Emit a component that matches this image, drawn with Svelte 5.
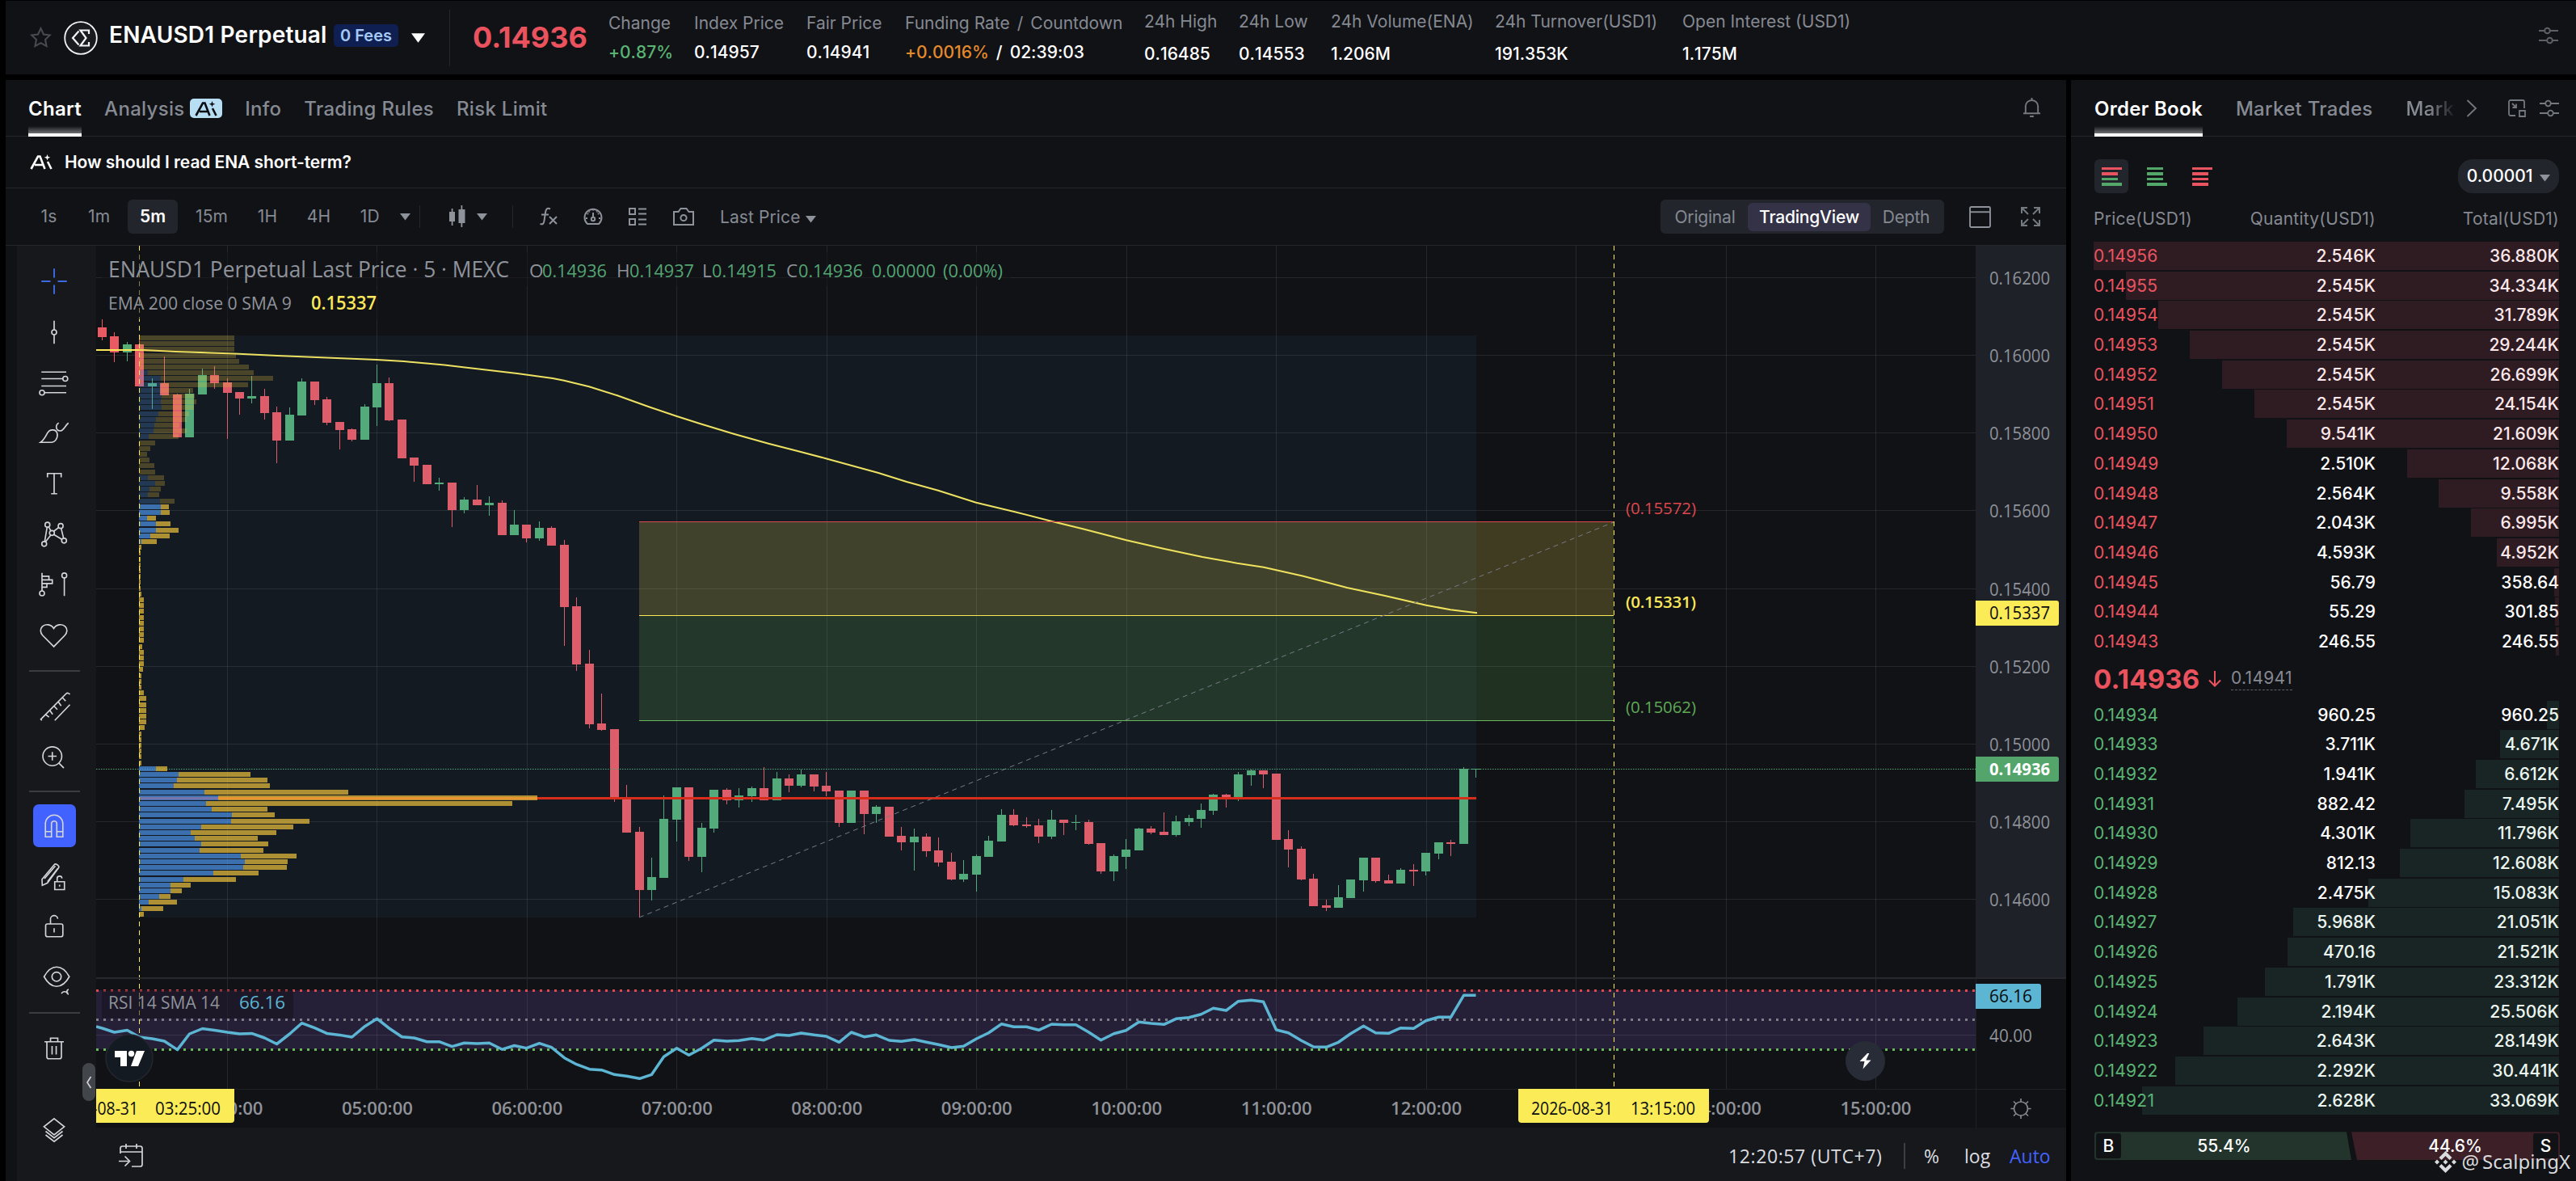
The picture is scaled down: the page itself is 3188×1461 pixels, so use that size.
<script>
    const stats = [
        { label: 'Change', value: '+0.87%', tone: 'up', w: 106 },
        { label: 'Index Price', value: '0.14957', w: 139 },
        { label: 'Fair Price', value: '0.14941', w: 122 },
        { label: 'Funding Rate', extra: 'Countdown', value: '+0.0016%', countdown: '02:39:03', w: 296 },
        { label: '24h High', value: '0.16485', w: 117, low: true },
        { label: '24h Low', value: '0.14553', w: 114, low: true },
        { label: '24h Volume(ENA)', value: '1.206M', w: 203, low: true },
        { label: '24h Turnover(USD1)', value: '191.353K', w: 232, low: true },
        { label: 'Open Interest (USD1)', value: '1.175M', w: 240, low: true }
    ];

    const asks = [
        ['0.14956', '2.546K', '36.880K'], ['0.14955', '2.545K', '34.334K'], ['0.14954', '2.545K', '31.789K'],
        ['0.14953', '2.545K', '29.244K'], ['0.14952', '2.545K', '26.699K'], ['0.14951', '2.545K', '24.154K'],
        ['0.14950', '9.541K', '21.609K'], ['0.14949', '2.510K', '12.068K'], ['0.14948', '2.564K', '9.558K'],
        ['0.14947', '2.043K', '6.995K'], ['0.14946', '4.593K', '4.952K'], ['0.14945', '56.79', '358.64'],
        ['0.14944', '55.29', '301.85'], ['0.14943', '246.55', '246.55']
    ];
    const bids = [
        ['0.14934', '960.25', '960.25'], ['0.14933', '3.711K', '4.671K'], ['0.14932', '1.941K', '6.612K'],
        ['0.14931', '882.42', '7.495K'], ['0.14930', '4.301K', '11.796K'], ['0.14929', '812.13', '12.608K'],
        ['0.14928', '2.475K', '15.083K'], ['0.14927', '5.968K', '21.051K'], ['0.14926', '470.16', '21.521K'],
        ['0.14925', '1.791K', '23.312K'], ['0.14924', '2.194K', '25.506K'], ['0.14923', '2.643K', '28.149K'],
        ['0.14922', '2.292K', '30.441K'], ['0.14921', '2.628K', '33.069K']
    ];
    const depth = (total) => {
        const n = parseFloat(total) * (total.endsWith('K') ? 1 : 0.001);
        return (n / 36.88) * 100;
    };

    // chart geometry: svg user units are page pixels
    const hourX = (i) => 281.5 + i * 185.45;
    const hours = ['04', '05', '06', '07', '08', '09', '10', '11', '12', '13', '14', '15'];
    const priceLabels = ['0.16200', '0.16000', '0.15800', '0.15600', '0.15400', '0.15200', '0.15000', '0.14800', '0.14600'];
    const gridY = (i) => Math.round(343 + i * 96.13) + 0.5;
    const candleX = (i) => Math.floor(126.5 + i * 15.4545) + 0.5;

    // wick top, body top, body bottom, wick bottom; leading minus marks a falling candle
    const candles = [
        [-395,405,417,421],[-411,416,436,448],[423,426,436,447],[-419,426,478,478],[468,474,478,506],[-441,474,489,489],
        [-487,488,541,541],[481,487,541,541],[456,464,488,488],[-453,464,474,481],[-468,473,486,543],[-485,485,493,513],
        [465,490,493,499],[-481,490,511,519],[-503,510,545,573],[504,513,545,545],[468,472,514,514],[-472,472,495,501],
        [-491,494,523,526],[-522,522,532,556],[-530,531,544,546],[500,503,544,544],[451,474,504,527],[-467,474,520,521],
        [-519,519,567,567],[-566,566,576,596],[-575,575,599,599],[591,597,599,607],[-597,597,631,652],[615,618,631,635],
        [-600,618,625,625],[614,622,625,638],[-619,622,662,662],[631,649,662,662],[-649,649,666,671],[645,653,666,669],
        [-651,653,675,675],[-668,674,751,799],[-739,750,822,830],[-804,821,896,901],[-858,895,903,904],[-902,902,988,992],
        [-971,987,1030,1030],[-1023,1029,1101,1135],[1061,1085,1101,1114],[984,1013,1086,1086],[974,974,1014,1041],[-974,974,1060,1065],
        [1018,1024,1060,1079],[977,977,1025,1030],[-975,977,990,995],[975,984,990,999],[973,975,985,992],[-949,975,990,990],
        [955,963,990,990],[-958,963,972,980],[952,958,972,974],[-958,958,973,979],[-955,972,979,985],[-978,978,1018,1023],
        [978,978,1018,1018],[-978,978,1007,1032],[996,998,1007,1018],[-998,998,1035,1035],[-1023,1034,1042,1052],[1025,1035,1042,1077],
        [-1031,1035,1053,1060],[-1036,1052,1067,1072],[-1055,1066,1088,1089],[1064,1081,1088,1091],[1057,1059,1082,1103],[1034,1040,1060,1060],
        [1001,1008,1041,1041],[-1001,1008,1021,1022],[-1011,1020,1022,1024],[-1013,1021,1035,1043],[1002,1014,1035,1038],[-1014,1014,1018,1033],
        [1008,1017,1018,1027],[-1014,1017,1044,1045],[-1043,1043,1078,1081],[1057,1059,1078,1090],[1038,1051,1060,1075],[1024,1025,1052,1052],
        [-1022,1025,1030,1032],[-1005,1029,1033,1033],[1009,1016,1033,1035],[1008,1012,1017,1022],[994,1002,1013,1024],[982,983,1003,1008],
        [-982,983,987,999],[955,958,988,991],[952,953,959,972],[-953,953,958,975],[-957,957,1039,1039],[-1027,1038,1051,1073],
        [-1047,1050,1088,1089],[-1081,1087,1121,1121],[-1113,1120,1123,1127],[1095,1110,1123,1123],[1088,1088,1111,1111],[1061,1061,1089,1103],
        [-1061,1061,1090,1092],[-1082,1089,1093,1093],[1074,1076,1093,1093],[-1069,1076,1078,1096],[1055,1055,1078,1083],[1042,1042,1056,1063],
        [-1039,1042,1044,1059],[949,951,1044,1044],[951,951,952,962]
    ].map(([h, o, c, l], i) => ({ x: candleX(i), up: h > 0, h: Math.abs(h), top: o, bottom: c, l }));

    // volume profile rows, [total width, buy width]
    const profile = [
        [118,0],[118,0],[118,0],[120,0],[124,0],[136,0],[142,11],[166,27],[135,27],[67,27],
        [69,28],[71,27],[68,28],[62,24],[59,21],[50,19],[59,18],[49,12],[20,0],[14,0],
        [10,0],[13,0],[19,0],[20,0],[31,11],[32,20],[27,13],[25,11],[44,26],[37,27],
        [38,27],[21,10],[39,21],[49,21],[38,14],[22,3],[3,0],[2,0],[2,0],[2,0],
        [2,0],[2,0],[2,0],[2,0],[3,0],[6,0],[6,0],[6,0],[6,0],[6,0],
        [6,0],[6,0],[6,0],[4,0],[6,0],[6,0],[6,0],[5,0],[3,0],[3,0],
        [3,0],[6,0],[9,0],[9,0],[9,0],[9,0],[9,0],[7,0],[3,0],[3,0],
        [3,0],[3,0],[3,0],[3,0],[35,21],[138,49],[159,47],[162,43],[259,81],[493,98],
        [462,83],[159,90],[168,115],[211,114],[191,77],[170,64],[147,69],[160,77],[154,75],[195,126],
        [184,131],[183,129],[148,92],[120,55],[64,39],[53,39],[39,25],[47,12],[30,3],[6,0]
    ];

    const ema = '119,433 178,433 217,435 290,437.5 343,440 466,445 500,447 550,451.5 571,454 640,462 684,468 698,470.7 729,478.3 764,489.3 803,503.3 837,514.7 866,524 908,536.7 951,548.7 990,558.7 1024,567.7 1087,585 1122,596 1161,606.7 1208,621.7 1255,633 1301,644.7 1340,654.3 1394,668.3 1441,679 1488,689 1531,696.7 1564,701.7 1613,712.7 1667,727 1714,737 1765,748.7 1795,754.3 1828,758.3';

    const rsi = [
        1272,1277,1274.5,1283,1285,1288,1298.6,1279,1272.5,1274.5,1277,1279,1278.4,1284,1291.5,1279,1265.7,1271.7,1278.4,1280.4,
        1283,1269.7,1260.2,1272,1282.8,1284,1288.7,1288.7,1294.6,1290.3,1291,1290.3,1298.2,1293.5,1296.6,1290.7,1295.7,1308.7,1316.7,1322.7,
        1323.7,1329.3,1331.3,1334.3,1329.3,1307.3,1296.7,1305.3,1296.7,1286.7,1288,1287.3,1284.7,1286.7,1280,1281,1278,1280.3,1282,1289.3,
        1277,1282.7,1280.3,1287,1288.3,1286,1289.3,1292.3,1296,1294.3,1285,1277.7,1266.7,1270.3,1270.3,1274.3,1267,1267.7,1267.7,1277,
        1286.7,1278.7,1274.7,1264.3,1266,1267.3,1260.3,1258.7,1254.7,1247.3,1250,1238.7,1237.3,1239.3,1274,1277.7,1287.3,1295,1295.3,1289.3,
        1278.7,1269.3,1277.7,1278.3,1271.7,1272.3,1262.7,1258.3,1258.3,1231.3,1231.3
    ];
    const rsiPoints = '119,1270 ' + rsi.map((y, i) => `${candleX(i)},${y}`).join(' ');

    const ohlc = [
        ['O', '0.14936', 655, 671], ['H', '0.14937', 763, 779], ['L', '0.14915', 869, 881], ['C', '0.14936', 973, 988]
    ];
</script>

{#snippet caret()}
    <svg class="caret" viewBox="0 0 13 9"><path d="M0 0.500h13l-6.500 8.500z" /></svg>
{/snippet}

{#snippet sliders()}
    <svg width="26" height="26" viewBox="0 0 26 26" fill="none" stroke="currentColor" stroke-width="2">
        <path d="M1 7h7M15 7h10M1 19h10M18 19h7" /><circle cx="11.5" cy="7" r="3.3" /><circle cx="14.5" cy="19" r="3.3" />
    </svg>
{/snippet}

{#snippet aiMark()}
    <path d="M1.500 18L10 2.500h2.500L18.500 18M6 13h9.500M22 9l4.500 9" fill="none" stroke="currentColor" stroke-width="2.6" />
    <path d="M21.500 0l1 2.800 2.800 1-2.800 1-1 2.800-1-2.800-2.800-1 2.800-1z" fill="currentColor" />
{/snippet}

<div class="app">
    <header>
        <svg class="star" viewBox="0 0 26 26"><path d="M13 2l3.3 7.2 7.6.9-5.6 5.3 1.5 7.8L13 19.4l-6.8 3.8 1.5-7.8L2.100 10.100l7.600-.9z" /></svg>
        <svg class="coin" viewBox="0 0 42 42" fill="none" stroke="#f2f3f5">
            <circle cx="21" cy="21" r="19.800" stroke-width="1.800" fill="#1a1b1f" />
            <path d="M31 16v-4.500H20.500l7 9.500-7 9.500H31V26M18.500 12.500L11 21l7.500 8.500" stroke-width="2.200" />
        </svg>
        <h1>ENAUSD1 Perpetual</h1>
        <span class="fees">0 Fees</span>
        <svg class="pair-caret" viewBox="0 0 18 12"><path d="M0 0h18l-9 12z" fill="#fff" /></svg>
        <div class="last">0.14936</div>
        <div class="stats">
            {#each stats as s}
                <div class="stat" class:low={s.low} style="width: {s.w}px">
                    <div class="label">{s.label}{#if s.extra}<i>/</i>{s.extra}{/if}</div>
                    <div class="value {s.tone}">
                        {#if s.countdown}<b>{s.value}</b><i>/</i>{s.countdown}{:else}{s.value}{/if}
                    </div>
                </div>
            {/each}
        </div>
        <span class="head-settings">{@render sliders()}</span>
    </header>

    <div class="columns">
        <main>
            <nav class="tabs">
                <span class="active">Chart</span>
                <span>Analysis <svg class="ai-badge" viewBox="0 0 40 24"><rect width="40" height="24" rx="5" fill="#b7def2" /><g transform="translate(6 3)" color="#0b0d12">{@render aiMark()}</g></svg></span>
                <span>Info</span>
                <span>Trading Rules</span>
                <span>Risk Limit</span>
                <svg class="bell" viewBox="0 0 24 26" fill="none" stroke="#74787f" stroke-width="2"><path d="M4 20V11a8 8 0 0 1 16 0v9M1 20h22M9.500 24h5M12 3V0" /></svg>
            </nav>
            <div class="ask-ai">
                <svg width="29" height="19" viewBox="0 0 29 19" color="#fff">{@render aiMark()}</svg>
                How should I read ENA short-term?
            </div>
            <div class="toolbar">
                <div class="intervals">
                    <span>1s</span><span>1m</span><span class="active">5m</span><span>15m</span><span>1H</span><span>4H</span><span>1D</span>
                    {@render caret()}
                </div>
                <div class="group style">
                    <svg width="24" height="28" viewBox="0 0 24 28"><path d="M2 8h7v12H2zM4.700 4h1.800v21H4.700zM13.500 5h8v17h-8zM16.500 0h1.800v27h-1.800z" fill="#8d929b" /></svg>
                    {@render caret()}
                </div>
                <div class="group tools">
                    <svg width="24" height="26" viewBox="0 0 24 26" fill="none" stroke="currentColor" stroke-width="2"><path d="M14 3.500C10 1.500 8.500 4 8 8L6.500 18c-.5 4-2 5-5 4M3 10.500h9M13 13l9 9M22 13l-9 9" /></svg>
                    <svg width="24" height="24" viewBox="0 0 24 24" fill="none" stroke="currentColor" stroke-width="2"><path d="M5 21a10.500 10.500 0 1 1 14 0z" /><circle cx="12" cy="15" r="2.200" /><path d="M12 12.800V7M12 3.500v1M5 8l1 1M19 8l-1 1M3 14h2M21 14h-2M7 5.500l.6 1M17 5.500l-.6 1" /></svg>
                    <svg width="24" height="24" viewBox="0 0 24 24" fill="none" stroke="currentColor" stroke-width="2"><path d="M2 2h7v7H2zM2 15h7v7H2zM13 2.500h10M13 8.500h10M13 15.500h10M13 21.500h10" /></svg>
                    <svg width="28" height="24" viewBox="0 0 28 24" fill="none" stroke="currentColor" stroke-width="2"><path d="M2 6h5.500l3-4h7l3 4H26v16H2z" /><circle cx="14" cy="13.500" r="3.600" /></svg>
                    <span class="price-kind">Last Price {@render caret()}</span>
                </div>
                <div class="segmented"><span>Original</span><span class="active">TradingView</span><span>Depth</span></div>
                <svg class="pane" viewBox="0 0 26 26" fill="none" stroke="#8d929b" stroke-width="1.800"><rect x="1" y="1" width="24" height="24" rx="1.500" /><path d="M1 7h24" /></svg>
                <svg class="expand" viewBox="0 0 24 24" fill="none" stroke="#74787f" stroke-width="2"><path d="M1 8V1h7M1 1l8 8M16 1h7v7M23 1l-8 8M1 16v7h7M1 23l8-8M23 16v7h-7M23 23l-8-8" /></svg>
            </div>

            <div class="workspace">
                <aside>
                    <button aria-label="Cross"><svg viewBox="0 0 28 28" class="blue"><path d="M14 3.500V11M14 17v7.500M3.500 14H11M17 14h7.500" /></svg></button>
                    <button aria-label="Trend line"><svg viewBox="0 0 28 28"><path d="M14 4.500V12M14 16v7.500" /><circle cx="14" cy="14" r="2" /></svg></button>
                    <button aria-label="Fib retracement"><svg viewBox="0 0 28 28"><path d="M3.500 5.500H24M3.500 11h17.700M3.500 17H24M6 22.500h18" /><circle cx="23.200" cy="11" r="2" /><circle cx="4" cy="22.500" r="2" /></svg></button>
                    <button aria-label="Brush"><svg viewBox="0 0 28 28"><path d="M2.800 21.500h8.500c3.800 0 6-4 5.200-7.500-.9-3.500-6-3.800-8-.2-1.500 2.700-2.700 5.700-5.700 7.700zM17.800 5.500c-3 1.500-2.500 6.500 1 6.500 3.200 0 3.700-3.700 7-6.500" /></svg></button>
                    <button aria-label="Text"><svg viewBox="0 0 28 28"><path d="M8.500 9V5.800h11.300V9M14 5.800v16.800M11.500 22.500h5" /></svg></button>
                    <button aria-label="Pattern"><svg viewBox="0 0 28 28"><path d="M8.200 8.100L6.200 19.900M9.500 7.900l1.800 3.200M11.200 14.600l-4.300 5.500M13.700 11.500l4.200-3.200M19.800 9.100l2 8.200M13.700 14.200l6.700 4" /><circle cx="8.500" cy="6.100" r="2" /><circle cx="19.400" cy="7.100" r="2" /><circle cx="12.200" cy="12.900" r="2" /><circle cx="22.200" cy="19.200" r="2" /><circle cx="5.800" cy="21.900" r="2" /></svg></button>
                    <button aria-label="Forecast"><svg viewBox="0 0 28 28"><path d="M4 4.500v15M4 7.200h5.700v3H4M4 10.200h8.500v3H4M4 13.200h4v3H4M22.400 8.500v15" /><circle cx="4" cy="21.300" r="2" /><circle cx="22.400" cy="6.600" r="2" /></svg></button>
                    <button aria-label="Icons"><svg viewBox="0 0 28 28"><path d="M13.700 23.300L4.500 14c-2-2.200-2.300-5.300-.3-7.300 2.500-2.400 7.200-2 9.500 1.600 2.200-3.600 7-4 9.500-1.600 2 2 1.700 5.100-.4 7.300z" /></svg></button>
                    <hr />
                    <button aria-label="Measure"><svg viewBox="0 0 28 28"><path d="M3.800 25.500L3 24.600 23.800 3.500c1-1 2.500-.5 3.200.5M14.500 25.500L27 12.500M6.800 20.500l3 2.200M10.300 17l2.500 3.500M13.800 13.500l2.800 3M17.300 10l2.500 3.500M20.700 6.500l2.800 3" /></svg></button>
                    <button aria-label="Zoom in"><svg viewBox="0 0 28 28"><circle cx="12.500" cy="13" r="7.800" /><path d="M18 18.800l4 4M9 13h7M12.500 9.500v7" /></svg></button>
                    <hr class="tight" />
                    <button aria-label="Magnet" class="on"><svg viewBox="0 0 28 28"><path d="M6.800 22.800V12a7.200 7.200 0 0 1 14.400 0v10.800h-5V12a2.200 2.200 0 0 0-4.400 0v10.800zM6.800 18.500h5M16.200 18.500h5" /></svg></button>
                    <button aria-label="Lock drawing mode"><svg viewBox="0 0 28 28"><path d="M4 16.500L14.200 4.300c1-1.200 4.500 1.200 3.500 2.700L8.500 19.500 4.200 21.500zM6 16l9-10.500M8.500 18.500L17 7.500M14.500 18.500h8v6.500h-8zM16.500 18.500v-2.300a2 2 0 0 1 4-.5M18.500 21v1.500" /></svg></button>
                    <button aria-label="Lock all"><svg viewBox="0 0 28 28"><rect x="7" y="12" width="14.200" height="10.500" rx="1.500" /><path d="M11 12V8.500a3 3 0 0 1 6-.8M14 15.500v3.500" /></svg></button>
                    <button aria-label="Hide"><svg viewBox="0 0 28 28"><path d="M5.700 13.500C9 7.500 12 5.500 16 5.500s7.200 2 10.500 8C23.200 19.500 20 21.500 16 21.500s-7-2-10.300-8z" /><circle cx="16" cy="13.500" r="3.800" /><path d="M20 27.500c1-2 3.500-2.200 5.500-.5M26 24c-2 .5-2 3.500 0 4" /></svg></button>
                    <hr />
                    <button aria-label="Remove"><svg viewBox="0 0 28 28"><path d="M6 8.500h16M8 8.500v12.500a1.500 1.500 0 0 0 1.500 1.500h9a1.500 1.500 0 0 0 1.500-1.500V8.500M11 8.500V5.500h6v3M12.300 12v7M15.700 12v7" /></svg></button>
                    <button aria-label="Object tree" class="last-tool"><svg viewBox="0 0 28 28"><path d="M14 4.600l8.400 6.600L14 18l-8.400-6.800zM7 15l7 5.500 7-5.500M7 18l7 5.500 7-5.500" /></svg></button>
                    <span class="handle"><svg width="8" height="16" viewBox="0 0 8 16"><path d="M6.500 1L2 8l4.500 7" /></svg></span>
                </aside>

                <div class="chart-col">
                    <svg class="chart" width="2438" height="1091" viewBox="119 304 2438 1091">
                        <clipPath id="plot"><rect x="119" y="304" width="2326" height="1091" /></clipPath>
                        <g clip-path="url(#plot)">
                            {#each hours as h, i}
                                <path d="M{Math.floor(hourX(i)) + 0.5} 304V1347" class="grid" />
                            {/each}
                            {#each priceLabels as p, i}
                                <path d="M119 {gridY(i)}H2445" class="grid" />
                            {/each}

                            <!-- rsi band -->
                            <rect x="119" y="1225" width="2326" height="73" fill="#7e57c2" fill-opacity="0.200" />
                            <path d="M119 1280.500H2445" class="grid" />
                            <path d="M119 1225.500H2445" stroke="#e0494f" class="dots" />
                            <path d="M119 1261.500H2445" stroke="#7d7f86" class="dots" />
                            <path d="M119 1298.500H2445" stroke="#6ab85c" class="dots" />

                            {#each candles as c}
                                <g fill={c.up ? '#56ad75' : '#ea5a63'}>
                                    <rect x={c.x - 0.5} y={c.h} width="1" height={c.l - c.h} />
                                    <rect x={c.x - 5.5} y={c.top} width="11" height={c.bottom - c.top} />
                                </g>
                            {/each}
                            <polyline points={ema} fill="none" stroke="#fbe85a" stroke-width="2" stroke-linejoin="round" />
                            <path d="M119 951.500H2445" stroke="#53a574" stroke-dasharray="1.500 1.500" />

                            <!-- fixed range volume profile -->
                            <rect x="172" y="415" width="1655" height="720" fill="#3c93c1" fill-opacity="0.070" />
                            <rect x="172" y="986" width="1655" height="3" fill="#d92d1c" />
                            {#each profile as [total, buy], k}
                                {@const y = Math.round(415 + k * 7.2)}
                                <g fill-opacity={k < 29 ? 0.25 : 0.7}>
                                    <rect x="172" {y} width={buy} height="6" fill="#4e94e9" />
                                    <rect x={172 + buy} {y} width={total - buy} height="6" fill="#f0c33c" />
                                </g>
                            {/each}

                            <!-- fib levels -->
                            <rect x="791" y="646" width="1206" height="115" fill="#fbe64e" fill-opacity="0.200" />
                            <rect x="791" y="762" width="1206" height="129" fill="#64af50" fill-opacity="0.200" />
                            <path d="M791 645.500H1997" stroke="#e0494f" />
                            <path d="M791 761.500H1997" stroke="#fbe85a" />
                            <path d="M791 891.500H1997" stroke="#6ab85c" />
                            <path d="M791 1135L1997 646" stroke="#787b86" stroke-dasharray="6 5" />
                            <path d="M172.500 304V1347M1997.500 304V1347" stroke="#fbe85a" stroke-dasharray="6 5" />
                            <g font-size="20.500">
                                <text x="2012" y="635.500" fill="#dc474d" textLength="87">(0.15572)</text>
                                <text x="2012" y="751.500" fill="#fbe85a" textLength="87" font-weight="600">(0.15331)</text>
                                <text x="2012" y="881.500" fill="#5fa854" textLength="87">(0.15062)</text>
                            </g>
                            <polyline points={rsiPoints} fill="none" stroke="#5bb5d3" stroke-width="3.500" stroke-linejoin="round" />
                        </g>

                        <!-- legends -->
                        <rect x="126" y="312" width="1125" height="42" fill="#111216" fill-opacity="0.500" />
                        <rect x="126" y="357" width="350" height="38" fill="#111216" fill-opacity="0.500" />
                        <rect x="126" y="1225" width="237" height="35" fill="#111216" fill-opacity="0.500" />
                        <g fill="#8f939b">
                            <text x="134" y="342.500" font-size="27" textLength="496" lengthAdjust="spacingAndGlyphs">ENAUSD1 Perpetual Last Price · 5 · MEXC</text>
                            <text x="134" y="382.500" font-size="22.500" textLength="227" lengthAdjust="spacingAndGlyphs">EMA 200 close 0 SMA 9</text>
                            <text x="134" y="1248" font-size="22.500" textLength="138" lengthAdjust="spacingAndGlyphs">RSI 14 SMA 14</text>
                        </g>
                        <text x="385" y="382.500" font-size="22.500" fill="#fbe85a" font-weight="600" textLength="81" lengthAdjust="spacingAndGlyphs">0.15337</text>
                        <text x="296" y="1248" font-size="22.500" fill="#5bb5d3" textLength="57" lengthAdjust="spacingAndGlyphs">66.16</text>
                        <g font-size="22.500" fill="#53a574">
                            {#each ohlc as [k, v, kx, vx]}
                                <text x={kx} y="343" fill="#8f939b">{k}</text>
                                <text x={vx} y="343" textLength="80" lengthAdjust="spacingAndGlyphs">{v}</text>
                            {/each}
                            <text x="1079" y="343" textLength="79" lengthAdjust="spacingAndGlyphs">0.00000</text>
                            <text x="1167" y="343" textLength="74" lengthAdjust="spacingAndGlyphs">(0.00%)</text>
                        </g>

                        <!-- price axis -->
                        <rect x="2445" y="304" width="112" height="906" fill="#1e2128" />
                        <path d="M119 1210H2557" stroke="#26282e" stroke-width="2" />
                        <path d="M119 1347.500H2557M2445.500 1211V1395" stroke="#1f2126" />
                        <g font-size="21" fill="#8f9299">
                            {#each priceLabels as p, i}
                                <text x="2462" y={gridY(i) + 8} textLength="75" lengthAdjust="spacingAndGlyphs">{p}</text>
                            {/each}
                            <text x="2462" y="1288.500" textLength="53" lengthAdjust="spacingAndGlyphs">40.00</text>
                            <path d="M2445 743h100a3 3 0 0 1 3 3v25a3 3 0 0 1-3 3h-100z" fill="#fbec57" />
                            <path d="M2445 936h100a3 3 0 0 1 3 3v25a3 3 0 0 1-3 3h-100z" fill="#53a56b" />
                            <path d="M2445 1217h78a3 3 0 0 1 3 3v25a3 3 0 0 1-3 3h-78z" fill="#5bb5d3" />
                            <text x="2462" y="766" fill="#0b0c0f" textLength="75" lengthAdjust="spacingAndGlyphs" font-weight="500">0.15337</text>
                            <text x="2462" y="959" fill="#fff" textLength="75" lengthAdjust="spacingAndGlyphs" font-weight="700">0.14936</text>
                            <text x="2462" y="1240" fill="#0b0c0f" textLength="53" lengthAdjust="spacingAndGlyphs" font-weight="500">66.16</text>
                        </g>

                        <!-- time axis -->
                        <g font-size="21" fill="#8f9299" font-weight="600">
                            {#each hours as h, i}
                                <text x={hourX(i) - 44} y="1379" textLength="88" lengthAdjust="spacingAndGlyphs">{h}:00:00</text>
                            {/each}
                        </g>
                        <g clip-path="url(#plot)" font-size="21" fill="#0b0c0f">
                            <path d="M55 1347h235v38a4 4 0 0 1-4 4H55z" fill="#fbec57" />
                            <text x="70" y="1379" textLength="101" lengthAdjust="spacingAndGlyphs">2026-08-31</text>
                            <text x="192" y="1379" textLength="81" lengthAdjust="spacingAndGlyphs">03:25:00</text>
                            <path d="M1879 1347h236v38a4 4 0 0 1-4 4h-228a4 4 0 0 1-4-4z" fill="#fbec57" />
                            <text x="1895" y="1379" textLength="101" lengthAdjust="spacingAndGlyphs">2026-08-31</text>
                            <text x="2018" y="1379" textLength="80" lengthAdjust="spacingAndGlyphs">13:15:00</text>
                        </g>
                        <g stroke="#85888f" stroke-width="1.700" fill="none">
                            <circle cx="2501" cy="1371.500" r="8.500" />
                            <path d="M2501 1363v-4M2501 1380v4M2492.500 1371.500h-4M2509.500 1371.500h4M2495 1365.500l-3-3M2507 1365.500l3-3M2495 1377.500l-3 3M2507 1377.500l3 3" />
                        </g>

                        <circle cx="160" cy="1309" r="29" fill="#131a21" stroke="#25262f" stroke-width="1.500" />
                        <path d="M142 1300h15v19h-8v-11h-7zM169 1300h10l-8 19h-9z" fill="#fff" />
                        <circle cx="162.500" cy="1303.500" r="3.700" fill="#fff" />
                        <circle cx="2308.500" cy="1312.500" r="24.500" fill="#282c37" />
                        <path d="M2311 1303l-9.500 10h6l-2 9.500 10-11h-6.200l4-8.500z" fill="#fff" />
                    </svg>
                    <footer>
                        <svg width="32" height="32" viewBox="0 0 32 32" fill="none" stroke="#d4d6da" stroke-width="1.700"><path d="M3 13V6.500A2.500 2.500 0 0 1 5.500 4h22A2.500 2.500 0 0 1 30 6.500v20a2.500 2.500 0 0 1-2.500 2.500H17M3 11h27M10 1v6M23 1v6M1 22.500h12M8.500 16.500l6 6-6 6" /></svg>
                        <span class="clock">12:20:57 (UTC+7)</span>
                        <span class="pct">%</span>
                        <span class="log">log</span>
                        <span class="auto">Auto</span>
                    </footer>
                </div>
            </div>
        </main>

        <section class="book">
            <nav class="tabs">
                <span class="active">Order Book</span>
                <span>Market Trades</span>
                <span class="cut">Mark</span>
                <svg class="chev" viewBox="0 0 14 24"><path d="M1.500 2l10.500 10-10.500 10" /></svg>
                <svg class="layout" viewBox="0 0 22 22"><path d="M9 20H3a2 2 0 0 1-2-2V3a2 2 0 0 1 2-2h15a2 2 0 0 1 2 2v8M5 5l5 5M10 5.500V10H5.500M14 14h7v7h-7z" /></svg>
                <span class="book-settings">{@render sliders()}</span>
            </nav>
            <div class="book-tools">
                <span class="view active"><svg width="25" height="23" viewBox="0 0 25 23"><path d="M0 0h25v3H0zM0 6h20v4H0z" fill="#ea5460" /><path d="M0 13h20v3H0zM0 19h25v4H0z" fill="#53a869" /></svg></span>
                <span class="view"><svg width="25" height="23" viewBox="0 0 25 23"><path d="M0 0h20v3H0zM0 6h20v4H0zM0 13h20v3H0zM0 19h25v4H0z" fill="#53a869" /></svg></span>
                <span class="view"><svg width="25" height="23" viewBox="0 0 25 23"><path d="M0 0h25v3H0zM0 6h20v4H0zM0 13h20v3H0zM0 19h20v4H0z" fill="#ea5460" /></svg></span>
                <span class="tick">0.00001 {@render caret()}</span>
            </div>
            <div class="row head"><span>Price(USD1)</span><span>Quantity(USD1)</span><span>Total(USD1)</span></div>
            {#each asks as [price, qty, total]}
                <div class="row ask">
                    <span>{price}</span><span>{qty}</span><span>{total}</span>
                    <div class="bar" style="width: {depth(total)}%"></div>
                </div>
            {/each}
            <div class="mid">
                <strong>0.14936</strong>
                <svg width="16" height="20" viewBox="0 0 16 20"><path d="M8 0v18M1 11.500l7 7 7-7" /></svg>
                <span>0.14941</span>
            </div>
            {#each bids as [price, qty, total]}
                <div class="row bid">
                    <span>{price}</span><span>{qty}</span><span>{total}</span>
                    <div class="bar" style="width: {depth(total)}%"></div>
                </div>
            {/each}
            <div class="ratio">
                <div class="buy"><b>B</b><span>55.4%</span></div>
                <div class="sell"><span>44.6%</span><b>S</b></div>
            </div>
            <div class="watermark">
                <svg width="27" height="27" viewBox="0 0 27 27" fill="#d9dadc"><path d="M13.500 0l8 8-3 3-5-5-5 5-3-3zM3 10.500l3 3-3 3-3-3zM24 10.500l3 3-3 3-3-3zM13.500 10.500l3 3-3 3-3-3zM13.500 27l8-8-3-3-5 5-5-5-3 3z" /></svg>
                <span>@</span>ScalpingX
            </div>
        </section>
    </div>
</div>

<style>
    :global(body) {
        background: #000;
    }
    .app {
        width: 3188px;
        height: 1461px;
        overflow: hidden;
        box-sizing: border-box;
        padding: 1px 0 0 7px;
        display: flex;
        flex-direction: column;
        gap: 7px;
        background: #000;
        color: #fff;
        font-family: Inter, "Liberation Sans", sans-serif;
        font-size: 21px;
    }
    .app :global(svg) {
        flex: none;
    }
    header {
        height: 91px;
        flex: none;
        display: flex;
        align-items: center;
        background: #111216;
    }
    .star {
        width: 27px;
        height: 27px;
        margin-left: 30px;
        fill: none;
        stroke: #474a50;
        stroke-width: 2;
    }
    .coin {
        width: 42px;
        height: 42px;
        margin-left: 15px;
    }
    h1 {
        margin: 0 0 7px 14px;
        width: 278px;
        font-size: 28px;
        font-weight: 600;
        letter-spacing: 0.2px;
        white-space: nowrap;
    }
    .fees {
        width: 80px;
        height: 28px;
        line-height: 28px;
        margin-bottom: 6px;
        text-align: center;
        border-radius: 5px;
        background: #101f52;
        color: #a5caf5;
        font-size: 20px;
        font-weight: 600;
    }
    .pair-caret {
        width: 17px;
        height: 12px;
        margin-left: 16px;
    }
    .last {
        width: 168px;
        height: 70px;
        line-height: 69px;
        margin-left: 30px;
        padding-left: 28px;
        box-sizing: content-box;
        border-left: 1px solid #25272c;
        color: #ea535e;
        font-size: 36px;
        font-weight: 700;
    }
    .stats {
        display: flex;
    }
    .stat {
        white-space: nowrap;
        line-height: 25px;
        padding-bottom: 1px;
    }
    .stat .label {
        color: #858991;
        margin-bottom: 11px;
    }
    .stat.low .label {
        margin-top: -2px;
        margin-bottom: 15px;
    }
    .stat.low .value {
        margin-bottom: -2px;
    }
    .stat .value {
        font-weight: 500;
        font-kerning: none;
        font-feature-settings: "calt" 0;
    }
    .stat i {
        font-style: normal;
        margin: 0 9px;
    }
    .stat b {
        font-weight: 500;
        color: #e48a2c;
    }
    .stat .up {
        color: #5ab574;
    }
    .head-settings {
        margin-left: auto;
        margin-right: 21px;
        margin-bottom: 6px;
        color: #5c6067;
        display: flex;
    }
    .columns {
        flex: 1;
        display: flex;
        gap: 6px;
        min-height: 0;
    }
    main {
        width: 2550px;
        flex: none;
        background: #111216;
        display: flex;
        flex-direction: column;
    }
    .tabs {
        height: 70px;
        flex: none;
        box-sizing: border-box;
        border-bottom: 1px solid #24262b;
        display: flex;
        align-items: stretch;
        gap: 28px;
        padding-left: 28px;
        line-height: 71px;
        font-size: 24px;
        font-weight: 500;
        letter-spacing: 0.3px;
        color: #858a93;
        white-space: nowrap;
    }
    .tabs .active {
        color: #fff;
        font-weight: 600;
        height: 66px;
        border-bottom: 4px solid #fff;
        background: linear-gradient(to top, rgba(255, 255, 255, 0.4), transparent 9px);
    }
    .ai-badge {
        width: 40px;
        height: 24px;
        vertical-align: -3px;
    }
    .bell {
        width: 23px;
        height: 25px;
        align-self: center;
        margin-left: auto;
        margin-right: 31px;
    }
    .ask-ai {
        height: 64px;
        flex: none;
        box-sizing: border-box;
        border-bottom: 1px solid #24262b;
        display: flex;
        align-items: center;
        gap: 14px;
        padding-left: 30px;
        font-weight: 600;
        letter-spacing: -0.08px;
    }
    .toolbar {
        height: 71px;
        flex: none;
        box-sizing: border-box;
        border-bottom: 1px solid #24262b;
        display: flex;
        align-items: center;
        color: #858a93;
    }
    .toolbar :global(.caret), .tick :global(.caret) {
        width: 13px;
        height: 10px;
        fill: #8d929b;
    }
    .intervals {
        display: flex;
        align-items: center;
        width: 513px;
        box-sizing: border-box;
        padding-left: 29px;
        height: 28px;
        border-right: 1px solid #24262b;
    }
    .intervals span {
        height: 42px;
        line-height: 42px;
        padding: 0 14.5px;
        margin-right: 7.5px;
        letter-spacing: 0.2px;
        border-radius: 6px;
    }
    .intervals span:nth-child(2) {
        margin-left: 2px;
    }
    .intervals .active {
        background: #23252c;
        color: #fff;
        font-weight: 600;
    }
    .intervals :global(.caret) {
        margin-left: 3px;
    }
    .group {
        display: flex;
        align-items: center;
        color: #8d929b;
    }
    .style {
        gap: 12px;
        width: 115px;
        height: 28px;
        box-sizing: border-box;
        padding-left: 34px;
        border-right: 1px solid #24262b;
    }
    .tools {
        gap: 31px;
        padding-left: 32px;
    }
    .price-kind {
        color: #858a93;
        letter-spacing: 0.1px;
    }
    .segmented {
        display: flex;
        align-items: center;
        width: 351px;
        height: 42px;
        margin-left: auto;
        border-radius: 6px;
        background: #22252c;
        line-height: 35px;
    }
    .segmented span {
        width: 108px;
        text-align: center;
        letter-spacing: -0.2px;
    }
    .segmented span:first-child {
        width: 106px;
        padding-left: 2px;
    }
    .segmented span:last-child {
        width: 88px;
    }
    .segmented .active {
        width: 152px;
        background: #343247;
        border-radius: 6px;
        color: #fff;
        font-weight: 500;
    }
    .pane {
        width: 27px;
        height: 27px;
        margin-left: 31px;
    }
    .expand {
        width: 24px;
        height: 24px;
        margin: 0 32px 0 37px;
    }
    .workspace {
        flex: 1;
        display: flex;
        min-height: 0;
    }
    aside {
        position: relative;
        width: 98px;
        margin-left: 14px;
        box-sizing: border-box;
        padding-top: 13px;
        background: #17181b;
        display: flex;
        flex-direction: column;
        align-items: center;
        padding-right: 6px;
    }
    aside button {
        width: 53px;
        height: 62.5px;
        flex: none;
        padding: 0;
        border: 0;
        background: none;
        display: flex;
        align-items: center;
        justify-content: center;
    }
    aside svg {
        width: 42px;
        height: 42px;
        fill: none;
        stroke: #d3d5da;
        stroke-width: 1.1;
        overflow: visible;
    }
    aside .blue {
        stroke: #3e6ae1;
        stroke-width: 1.3;
    }
    aside .on {
        height: 53px;
        margin: 5px 0 4.5px;
        border-radius: 7px;
        background: #4262ff;
    }
    aside .last-tool {
        margin-top: 38px;
    }
    aside hr {
        width: 63px;
        height: 2px;
        margin: 12px 0;
        border: 0;
        background: #3a3d40;
        flex: none;
    }
    aside .tight {
        margin: 10px 0;
    }
    .handle {
        position: absolute;
        right: 1px;
        top: 1011px;
        width: 16px;
        height: 47px;
        border-radius: 8px;
        background: #42464a;
        display: flex;
        align-items: center;
        justify-content: center;
    }
    .handle svg {
        width: 8px;
        height: 16px;
        stroke-width: 1.6;
    }
    .chart-col {
        width: 2438px;
        display: flex;
        flex-direction: column;
    }
    .chart {
        display: block;
        font-family: "Open Sans", "Noto Sans", sans-serif;
    }
    .grid {
        stroke: #ffffff;
        stroke-opacity: 0.09;
    }
    .dots {
        stroke-width: 3;
        stroke-dasharray: 3 6;
    }
    footer {
        flex: 1;
        display: flex;
        align-items: center;
        background: #17181b;
        padding-left: 27px;
        padding-top: 3px;
        font-family: "Open Sans", "Noto Sans", sans-serif;
        font-size: 23px;
        color: #dadce0;
    }
    .clock {
        margin-left: auto;
        width: 217px;
        letter-spacing: 0.6px;
        border-right: 2px solid #3c3f43;
        white-space: nowrap;
    }
    .pct {
        width: 50px;
        padding-left: 23px;
    }
    .log {
        width: 56px;
    }
    .auto {
        width: 70px;
        color: #4262ff;
    }
    .book {
        position: relative;
        width: 625px;
        background: #111216;
        box-sizing: border-box;
    }
    .book .tabs {
        gap: 0;
        padding-left: 29px;
    }
    .book .tabs span {
        margin-right: 41px;
    }
    .book .tabs .cut {
        width: 62px;
        margin-right: 12px;
        overflow: hidden;
        mask-image: linear-gradient(to right, #000 45%, transparent);
    }
    .book .tabs svg {
        align-self: center;
        fill: none;
        stroke: #74787f;
        stroke-width: 1.8;
    }
    .book .chev {
        width: 14px;
        height: 24px;
    }
    .book .layout {
        width: 22px;
        height: 22px;
        margin-left: 38px;
    }
    .book .tabs .book-settings {
        margin: 0 0 0 16px;
        display: flex;
        align-items: center;
        color: #74787f;
    }
    .book-tools {
        display: flex;
        align-items: center;
        gap: 14px;
        padding: 28px 21px 0 29px;
    }
    .view {
        width: 42px;
        height: 42px;
        display: flex;
        align-items: center;
        justify-content: center;
        border-radius: 6px;
    }
    .view.active {
        background: #23252c;
    }
    .tick {
        margin-left: auto;
        width: 125px;
        height: 42px;
        line-height: 42px;
        border-radius: 18px;
        background: #23252c;
        text-align: center;
        font-weight: 500;
        white-space: nowrap;
    }
    .tick :global(.caret) {
        margin-left: 3px;
    }
    .row {
        position: relative;
        display: grid;
        grid-template-columns: 1fr 148px 227px;
        height: 36.69px;
        line-height: 36px;
        margin: 0 21px 0 28px;
        text-align: right;
        font-weight: 500;
        white-space: nowrap;
    }
    .row span:nth-child(2) {
        justify-self: end;
    }
    .row span:first-child {
        text-align: left;
        font-weight: 400;
        letter-spacing: 0.25px;
    }
    .row.head {
        height: 60px;
        line-height: 64px;
        color: #858991;
        font-weight: 400;
        letter-spacing: 0.25px;
    }
    .ask span:first-child {
        color: #ea535e;
    }
    .bid span:first-child {
        color: #5ab574;
    }
    .bar {
        position: absolute;
        right: 0;
        top: 0;
        height: 35px;
        background: rgba(237, 95, 111, 0.14);
    }
    .bid .bar {
        background: rgba(93, 180, 140, 0.12);
    }
    .mid {
        height: 54px;
        display: flex;
        align-items: center;
        padding-left: 28px;
        box-sizing: border-box;
    }
    .mid strong {
        width: 142px;
        font-size: 33px;
        font-weight: 700;
        letter-spacing: 0.2px;
        color: #ea535e;
    }
    .mid svg {
        fill: none;
        stroke: #ea535e;
        stroke-width: 2;
    }
    .mid span {
        margin-left: 12px;
        color: #858991;
        line-height: 28px;
        letter-spacing: 0.3px;
        border-bottom: 1px dashed #5c6067;
    }
    .ratio {
        display: flex;
        margin: 20px 20px 0 29px;
        height: 35px;
        line-height: 35px;
        font-weight: 500;
    }
    .ratio div {
        display: flex;
        align-items: center;
        box-sizing: border-box;
        padding: 2px;
    }
    .ratio span {
        flex: 1;
        text-align: center;
    }
    .ratio .buy span {
        padding-right: 28px;
    }
    .ratio b {
        width: 31px;
        height: 31px;
        line-height: 31px;
        background: #111216;
        text-align: center;
        font-weight: 500;
        border-radius: 3px;
    }
    .buy {
        width: 318px;
        background: #22342b;
        border-radius: 4px 0 0 4px;
        clip-path: polygon(0 0, 312px 0, 100% 100%, 0 100%);
    }
    .sell {
        flex: 1;
        background: #3d1f27;
        border-radius: 0 4px 4px 0;
        clip-path: polygon(0 0, 100% 0, 100% 100%, 7px 100%);
    }
    .ratio .sell span {
        padding-left: 30px;
    }
    .watermark {
        position: absolute;
        right: 7px;
        bottom: 8px;
        display: flex;
        align-items: center;
        font-family: "Noto Sans", sans-serif;
        font-size: 24px;
        color: #d9dadc;
        line-height: 32px;
    }
    .watermark span {
        margin: 0 4px 0 6px;
    }
</style>
